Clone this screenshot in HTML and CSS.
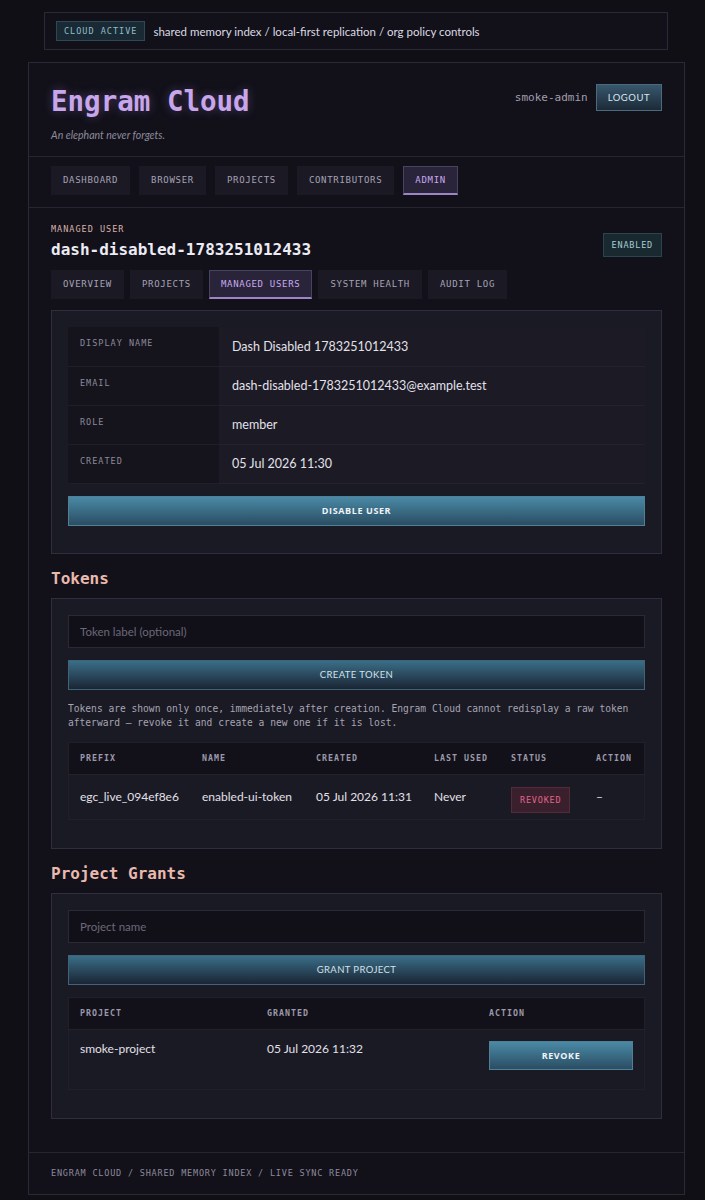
FILE: index.html
```html
<!DOCTYPE html>
<html lang="en">
<head>
    <meta charset="UTF-8">
    <meta name="viewport" content="width=device-width, initial-scale=1.0">
    <title>Engram Cloud - Admin</title>
    <link rel="stylesheet" href="styles.css">
</head>
<body>

    <div class="banner">
        <span class="badge-cloud">CLOUD ACTIVE</span>
        <span class="banner-text">shared memory index / local-first replication / org policy controls</span>
    </div>

    <div class="shell">
        <header class="top">
            <div>
                <h1 class="brand">Engram Cloud</h1>
                <p class="tagline">An elephant never forgets.</p>
            </div>
            <div class="account">
                <span class="username">smoke-admin</span>
                <button class="btn-logout">LOGOUT</button>
            </div>
        </header>

        <nav class="nav">
            <a class="tab">DASHBOARD</a>
            <a class="tab">BROWSER</a>
            <a class="tab">PROJECTS</a>
            <a class="tab">CONTRIBUTORS</a>
            <a class="tab active">ADMIN</a>
        </nav>

        <main class="content">
            <div class="user-head">
                <div>
                    <div class="eyebrow">MANAGED USER</div>
                    <h2 class="user-title">dash-disabled-1783251012433</h2>
                </div>
                <span class="badge-enabled">ENABLED</span>
            </div>

            <div class="subnav">
                <a class="tab">OVERVIEW</a>
                <a class="tab">PROJECTS</a>
                <a class="tab active">MANAGED USERS</a>
                <a class="tab">SYSTEM HEALTH</a>
                <a class="tab">AUDIT LOG</a>
            </div>

            <section class="panel panel-user">
                <table class="kv">
                    <tr><th>DISPLAY NAME</th><td>Dash Disabled 1783251012433</td></tr>
                    <tr><th>EMAIL</th><td>dash-disabled-1783251012433@example.test</td></tr>
                    <tr><th>ROLE</th><td>member</td></tr>
                    <tr><th>CREATED</th><td>05 Jul 2026 11:30</td></tr>
                </table>
                <button class="btn-primary">DISABLE USER</button>
            </section>

            <h3 class="section-title">Tokens</h3>
            <section class="panel">
                <input class="field" type="text" placeholder="Token label (optional)">
                <button class="btn-secondary">CREATE TOKEN</button>
                <p class="note">Tokens are shown only once, immediately after creation. Engram Cloud cannot redisplay a raw token afterward — revoke it and create a new one if it is lost.</p>
                <table class="grid tokens">
                    <thead>
                        <tr>
                            <th class="c-prefix">PREFIX</th>
                            <th class="c-name">NAME</th>
                            <th class="c-created">CREATED</th>
                            <th class="c-used">LAST USED</th>
                            <th class="c-status">STATUS</th>
                            <th>ACTION</th>
                        </tr>
                    </thead>
                    <tbody>
                        <tr>
                            <td>egc_live_094ef8e6</td>
                            <td>enabled-ui-token</td>
                            <td>05 Jul 2026 11:31</td>
                            <td>Never</td>
                            <td><span class="badge-revoked">REVOKED</span></td>
                            <td class="dash">–</td>
                        </tr>
                    </tbody>
                </table>
            </section>

            <h3 class="section-title">Project Grants</h3>
            <section class="panel">
                <input class="field" type="text" placeholder="Project name">
                <button class="btn-secondary">GRANT PROJECT</button>
                <table class="grid grants">
                    <thead>
                        <tr>
                            <th class="c-project">PROJECT</th>
                            <th class="c-granted">GRANTED</th>
                            <th>ACTION</th>
                        </tr>
                    </thead>
                    <tbody>
                        <tr>
                            <td>smoke-project</td>
                            <td>05 Jul 2026 11:32</td>
                            <td><button class="btn-primary btn-small">REVOKE</button></td>
                        </tr>
                    </tbody>
                </table>
            </section>
        </main>

        <footer class="footer">ENGRAM CLOUD / SHARED MEMORY INDEX / LIVE SYNC READY</footer>
    </div>

</body>
</html>
```

FILE: styles.css
```css
body {
    margin: 0;
    padding: 12px 0 4px;
    background: #100f16;
    color: #d8d6e0;
    font-family: Lato, "Noto Sans", sans-serif;
}

.banner {
    width: 624px;
    margin: 0 0 12px 44px;
    box-sizing: border-box;
    height: 38px;
    border: 1px solid #2a2935;
    background: #12111a;
    display: flex;
    align-items: center;
    padding: 0 11px;
    gap: 8px;
}

.badge-cloud {
    font-family: "DejaVu Sans Mono", monospace;
    font-size: 8.5px;
    letter-spacing: 1px;
    color: #8fbccb;
    background: #1a2a34;
    border: 1px solid #2e4856;
    padding: 4px 7px;
}

.banner-text {
    font-size: 11.5px;
    color: #dcdae4;
}

.shell {
    width: 657px;
    margin: 0 0 0 28px;
    box-sizing: border-box;
    border: 1px solid #2a2935;
    background: #12111a;
}

.top {
    display: flex;
    justify-content: space-between;
    align-items: flex-start;
    padding: 18px 22px 15px;
    border-bottom: 1px solid #262532;
}

.brand {
    margin: 0;
    font-family: "DejaVu Sans Mono", monospace;
    font-size: 27.5px;
    font-weight: bold;
    color: #c8a6ec;
    text-shadow: 0 0 10px rgba(180, 140, 230, 0.35);
    line-height: 40px;
}

.tagline {
    margin: 8px 0 0;
    font-size: 10.5px;
    font-style: italic;
    color: #8e8b9c;
}

.account {
    display: flex;
    align-items: center;
    gap: 8px;
    margin-top: 3px;
}

.username {
    font-family: "DejaVu Sans Mono", monospace;
    font-size: 11px;
    color: #a19eae;
}

.btn-logout {
    font-family: Lato, sans-serif;
    font-size: 9.5px;
    letter-spacing: 0.5px;
    color: #d8e6ee;
    background: linear-gradient(#38576c, #1c2a38);
    border: 1px solid #4b6a7e;
    padding: 7px 11px;
    cursor: pointer;
}

.nav {
    display: flex;
    gap: 9px;
    padding: 9px 22px 12px;
    border-bottom: 1px solid #262532;
}

.tab {
    display: inline-block;
    font-family: "DejaVu Sans Mono", monospace;
    font-size: 9px;
    line-height: 11px;
    letter-spacing: 0.7px;
    color: #a6a2b6;
    background: #1b1a24;
    padding: 8px 11px;
    border: 1px solid transparent;
}

.tab.active {
    color: #c9aaf0;
    background: #29243a;
    border: 1px solid #4a4262;
    border-bottom: 2px solid #9b85c4;
    padding-bottom: 7px;
}

.content {
    padding: 16px 22px 33px;
}

.user-head {
    display: flex;
    justify-content: space-between;
    align-items: flex-end;
}

.eyebrow {
    font-family: "DejaVu Sans Mono", monospace;
    font-size: 8.5px;
    letter-spacing: 1px;
    color: #d9b1aa;
}

.user-title {
    margin: 6px 0 0;
    font-family: "DejaVu Sans Mono", monospace;
    font-size: 16px;
    font-weight: bold;
    color: #ecebf3;
}

.badge-enabled {
    font-family: "DejaVu Sans Mono", monospace;
    font-size: 8.5px;
    letter-spacing: 0.8px;
    color: #a5ccd4;
    background: #192930;
    border: 1px solid #2a434e;
    padding: 6px 8px;
    margin-bottom: 2px;
}

.subnav {
    display: flex;
    gap: 6px;
    margin-top: 11px;
}

.panel {
    margin-top: 12px;
    background: #1a1a24;
    border: 1px solid #2f2e3c;
    padding: 16px 16px 28px;
}

.panel-user {
    margin-top: 11px;
    padding-bottom: 27px;
}

.kv {
    width: 100%;
    border-collapse: collapse;
    table-layout: fixed;
}

.kv th {
    width: 151px;
    text-align: left;
    vertical-align: top;
    font-family: "DejaVu Sans Mono", monospace;
    font-weight: normal;
    font-size: 8.5px;
    letter-spacing: 1px;
    color: #8c8a98;
    background: #15141d;
    padding: 11px 12px 0;
    height: 39px;
    box-sizing: border-box;
    border-bottom: 1px solid #1f1e29;
}

.kv td {
    font-size: 12.5px;
    color: #e3e1ea;
    background: #1b1a25;
    padding: 0 13px;
    border-bottom: 1px solid #23222e;
}

.btn-primary {
    display: block;
    width: 100%;
    height: 30px;
    margin-top: 12px;
    font-family: "Open Sans", Lato, sans-serif;
    font-size: 9px;
    font-weight: bold;
    letter-spacing: 0.6px;
    color: #f0f4f6;
    background: linear-gradient(#4a89a6, #2a4d62);
    border: 1px solid #4f8098;
    cursor: pointer;
}

.btn-secondary {
    display: block;
    width: 100%;
    height: 30px;
    margin-top: 12px;
    font-family: Lato, sans-serif;
    font-size: 9.5px;
    letter-spacing: 0.4px;
    color: #d4e0e8;
    background: linear-gradient(#3a6e88, #1a2534);
    border: 1px solid #3e6478;
    cursor: pointer;
}

.section-title {
    margin: 15px 0 0;
    font-family: "DejaVu Sans Mono", monospace;
    font-size: 16px;
    line-height: 20px;
    font-weight: bold;
    color: #eab9ad;
}

.section-title + .panel {
    margin-top: 9px;
}

.field {
    display: block;
    width: 100%;
    height: 33px;
    box-sizing: border-box;
    background: #111018;
    border: 1px solid #2a2935;
    color: #d8d6e0;
    font-family: Lato, sans-serif;
    font-size: 11.5px;
    padding: 0 11px;
}

.field::placeholder {
    color: #6b6878;
}

.note {
    margin: 12px 0 0;
    font-family: "DejaVu Sans Mono", monospace;
    font-size: 9.6px;
    line-height: 14px;
    color: #a7a4b3;
}

.grid {
    width: 100%;
    margin-top: 12px;
    border-collapse: collapse;
    border: 1px solid #20202b;
}

.grid th {
    text-align: left;
    font-family: "DejaVu Sans Mono", monospace;
    font-weight: bold;
    font-size: 8.3px;
    letter-spacing: 1px;
    color: #9c99aa;
    background: #121119;
    height: 31px;
    padding: 0 11px;
    border-bottom: 1px solid #22212c;
}

.grid td {
    font-size: 12px;
    color: #e2e0e8;
    background: #1a1a24;
    padding: 0 11px;
}

.tokens td {
    height: 44px;
}

.tokens .c-prefix { width: 100px; }
.tokens .c-name { width: 92px; }
.tokens .c-created { width: 96px; }
.tokens .c-used { width: 55px; }
.tokens .c-status { width: 63px; }

.badge-revoked {
    display: inline-block;
    font-family: "DejaVu Sans Mono", monospace;
    font-size: 8.5px;
    letter-spacing: 0.8px;
    color: #e0668a;
    background: #3a1f2c;
    border: 1px solid #55293a;
    padding: 7px 8px;
    margin-top: 6px;
}

.dash {
    color: #a8a6b4;
}

.grants td {
    vertical-align: top;
    padding-top: 11px;
    padding-bottom: 19px;
}

.grants .c-project { width: 165px; }
.grants .c-granted { width: 200px; }

.btn-small {
    margin-top: 0;
    height: 29px;
    font-size: 9px;
}

.footer {
    border-top: 1px solid #262532;
    padding: 15px 22px 16px;
    font-family: "DejaVu Sans Mono", monospace;
    font-size: 8.5px;
    letter-spacing: 0.8px;
    color: #8d8a9c;
}
```
